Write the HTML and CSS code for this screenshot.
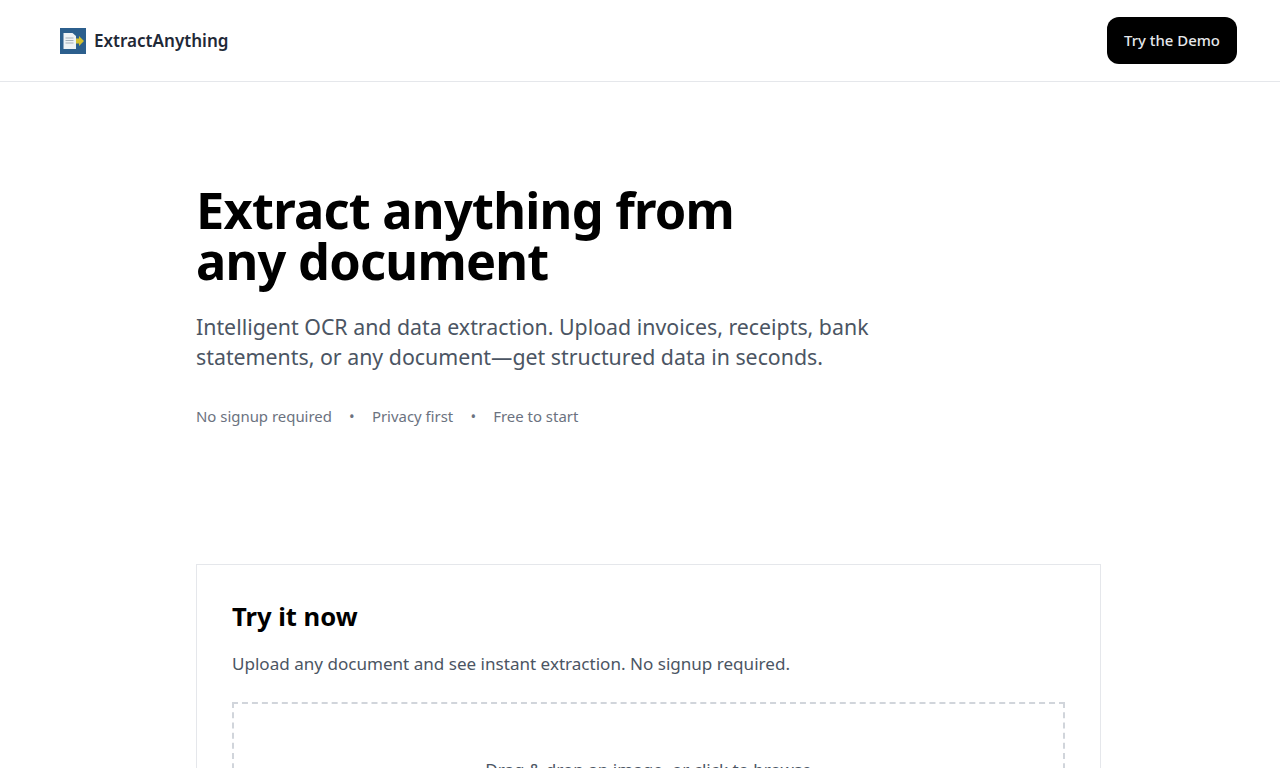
FILE: index.html
```html
<!DOCTYPE html>
<html lang="en">
<head>
<meta charset="utf-8">
<title>ExtractAnything</title>
<link rel="stylesheet" href="styles.css">
</head>
<body>
<header class="nav">
  <a class="brand" href="#">
    <svg class="logo" width="26" height="26" viewBox="0 0 26 26" aria-hidden="true">
      <rect width="26" height="26" fill="#2c5f8d"/>
      <path d="M3.500 5h9l3.500 3v13h-12.500z" fill="#eef2f5"/>
      <path d="M5.500 10h8M5.500 12.500h8M5.500 15h8" stroke="#a3aeb8" stroke-width="1.200"/>
      <path d="M16 10.500h3v-2.500l5 5-5 5v-2.500h-3z" fill="#d3c02f"/>
    </svg>
    <span>ExtractAnything</span>
  </a>
  <a class="demo" href="#">Try the Demo</a>
</header>
<main class="page">
  <section class="hero">
    <h1>Extract anything from<br>any document</h1>
    <p class="lead">Intelligent OCR and data extraction. Upload invoices, receipts, bank statements, or any document—get structured data in seconds.</p>
    <ul class="perks">
      <li>No signup required</li>
      <li class="dot">•</li>
      <li>Privacy first</li>
      <li class="dot">•</li>
      <li>Free to start</li>
    </ul>
  </section>
  <section class="card">
    <h2>Try it now</h2>
    <p class="sub">Upload any document and see instant extraction. No signup required.</p>
    <div class="drop">Drag &amp; drop an image, or click to browse</div>
  </section>
</main>
</body>
</html>
```
FILE: styles.css
```css
* { box-sizing: border-box; }
html, body { margin: 0; height: 768px; overflow: hidden; }
body { font-family: "Noto Sans", sans-serif; background: #fff; color: #000; }
a { text-decoration: none; color: inherit; }

.nav {
  height: 82px;
  display: flex;
  align-items: center;
  justify-content: space-between;
  padding: 0 43px 0 60px;
  border-bottom: 1px solid #e5e7eb;
}
.brand { display: flex; align-items: center; gap: 8px; font-size: 17.07px; line-height: 24px; font-weight: 600; color: #1f2937; }
.logo { display: block; }
.demo {
  display: flex; align-items: center; justify-content: center;
  width: 130px; height: 47px;
  padding-bottom: 1px;
  background: #000; color: #e5e7eb;
  border-radius: 12px;
  font-size: 14.93px; font-weight: 500;
}

.page { width: 905px; margin-left: 196px; }
.hero { padding-top: 102px; }
h1 { margin: 0; font-size: 50.5px; line-height: 51px; font-weight: 700; letter-spacing: -0.75px; }
.lead { margin: 26px 0 0; width: 720px; font-size: 21.33px; line-height: 30px; color: #4b5563; }
.perks { display: flex; gap: 17.2px; list-style: none; margin: 32px 0 0; padding: 0; font-size: 14.93px; line-height: 24px; color: #6b7280; }

.card { margin-top: 136px; height: 400px; border: 1px solid #e5e7eb; padding: 35px; }
h2 { margin: 0; font-size: 25.6px; line-height: 34px; font-weight: 700; }
.sub { margin: 16px 0 0; font-size: 17.07px; line-height: 28px; color: #4b5563; }
.drop { margin-top: 24px; height: 200px; border: 2px dashed #d1d5db; padding-top: 54px; text-align: center; font-size: 17.07px; line-height: 24px; color: #4b5563; }
```
